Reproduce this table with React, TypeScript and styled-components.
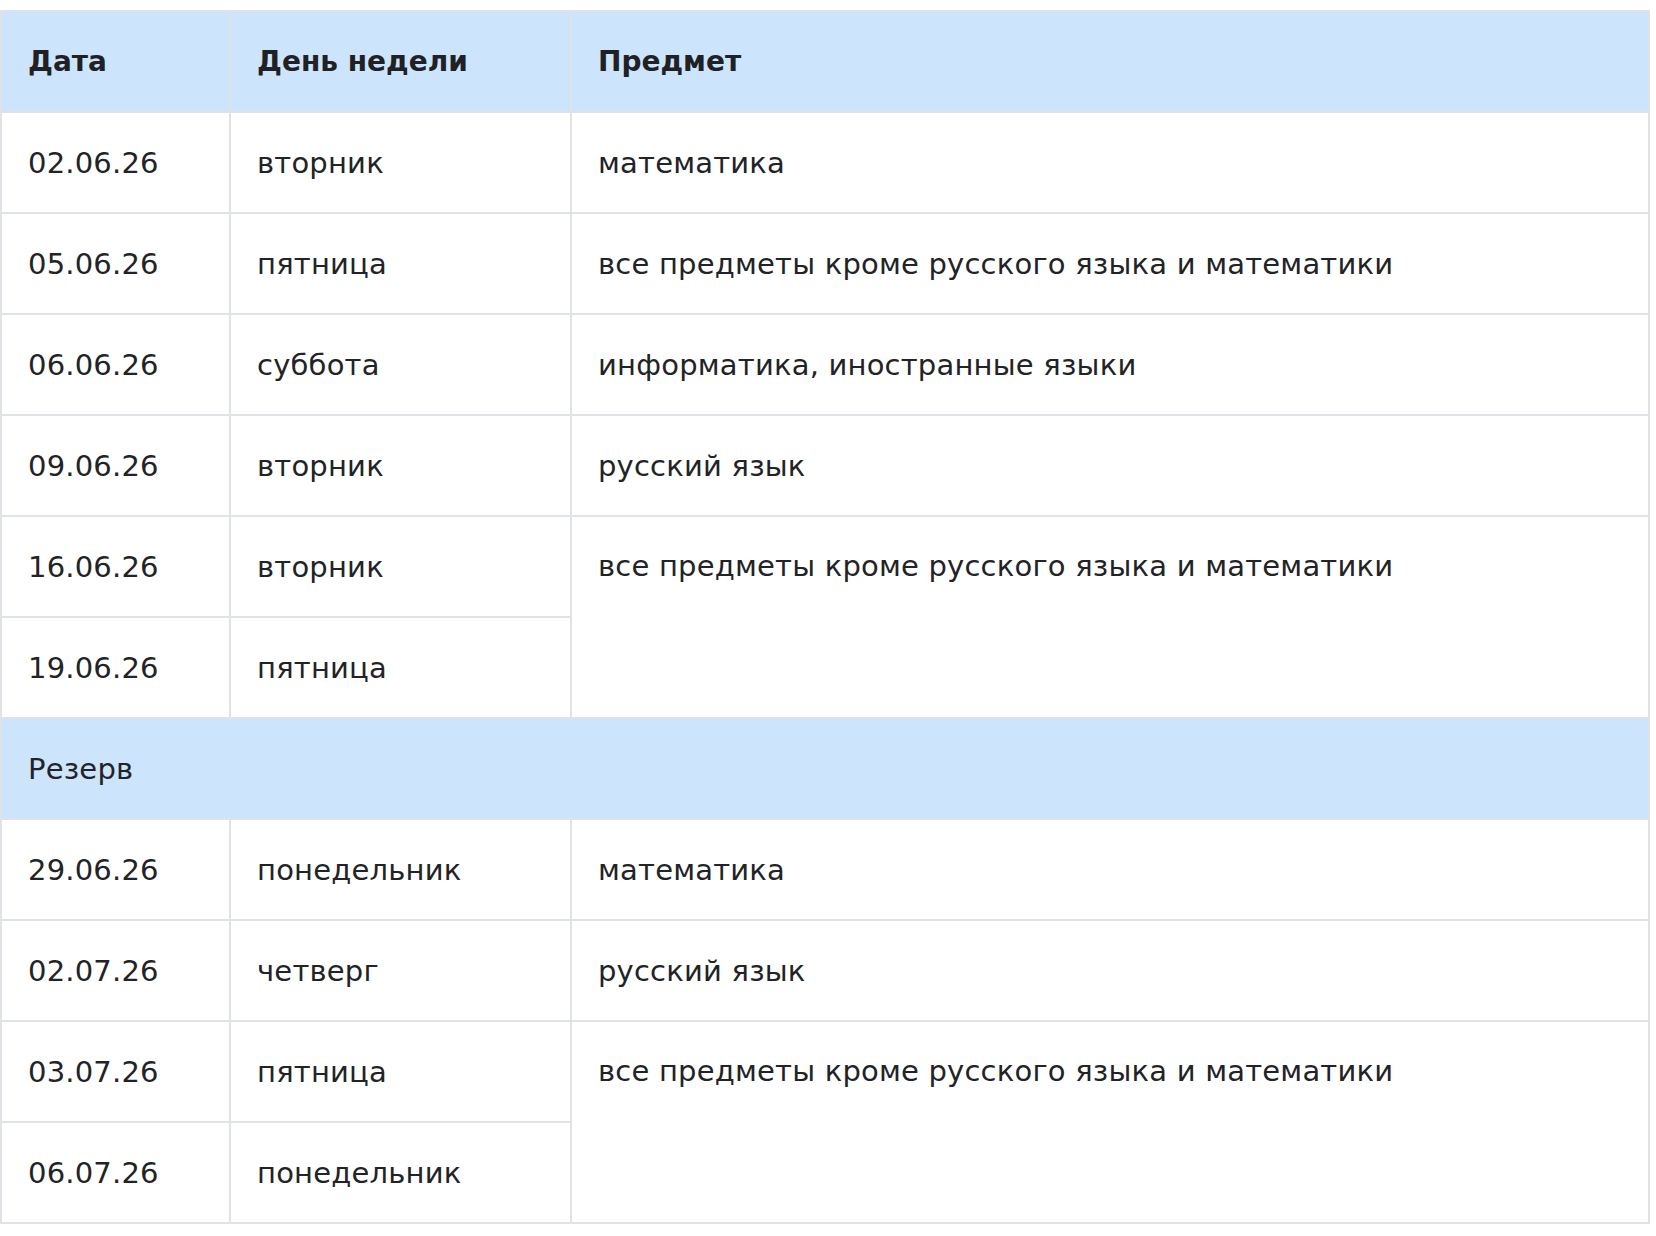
import React from 'react';
import styled, { createGlobalStyle } from 'styled-components';

const GlobalStyle = createGlobalStyle`
  html, body {
    margin: 0;
    padding: 0;
    background: #ffffff;
  }
  body {
    font-family: "DejaVu Sans", "Noto Sans", sans-serif;
    color: #222326;
  }
`;

interface ExamRow {
  date: string;
  weekday: string;
  subject?: string;
  span?: number;
}

const mainRows: ExamRow[] = [
  { date: '02.06.26', weekday: 'вторник', subject: 'математика' },
  { date: '05.06.26', weekday: 'пятница', subject: 'все предметы кроме русского языка и математики' },
  { date: '06.06.26', weekday: 'суббота', subject: 'информатика, иностранные языки' },
  { date: '09.06.26', weekday: 'вторник', subject: 'русский язык' },
  { date: '16.06.26', weekday: 'вторник', subject: 'все предметы кроме русского языка и математики', span: 2 },
  { date: '19.06.26', weekday: 'пятница' },
];

const reserveRows: ExamRow[] = [
  { date: '29.06.26', weekday: 'понедельник', subject: 'математика' },
  { date: '02.07.26', weekday: 'четверг', subject: 'русский язык' },
  { date: '03.07.26', weekday: 'пятница', subject: 'все предметы кроме русского языка и математики', span: 2 },
  { date: '06.07.26', weekday: 'понедельник' },
];

const renderRows = (rows: ExamRow[]) =>
  rows.map((row) => (
    <Row key={row.date}>
      <Cell>{row.date}</Cell>
      <Cell>{row.weekday}</Cell>
      {row.subject && (
        <Cell rowSpan={row.span ?? 1} $spanned={(row.span ?? 1) > 1}>
          {row.subject}
        </Cell>
      )}
    </Row>
  ));

export default function App() {
  return (
    <Page>
      <GlobalStyle />
      <Table>
        <colgroup>
          <col style={{ width: 229 }} />
          <col style={{ width: 341 }} />
          <col />
        </colgroup>
        <thead>
          <Row>
            <HeadCell>Дата</HeadCell>
            <HeadCell>День недели</HeadCell>
            <HeadCell>Предмет</HeadCell>
          </Row>
        </thead>
        <tbody>
          {renderRows(mainRows)}
          <Row>
            <SectionCell colSpan={3}>Резерв</SectionCell>
          </Row>
          {renderRows(reserveRows)}
        </tbody>
      </Table>
    </Page>
  );
}

const Page = styled.div`
  padding: 10px 6px 0 0;
`;

const Table = styled.table`
  width: 100%;
  border-collapse: collapse;
  table-layout: fixed;
`;

const Row = styled.tr`
  height: 101px;
`;

const Cell = styled.td<{ $spanned?: boolean }>`
  border: 2px solid #dfe3e8;
  padding: ${({ $spanned }) => ($spanned ? '32px 26px 0' : '0 26px')};
  vertical-align: ${({ $spanned }) => ($spanned ? 'top' : 'middle')};
  text-align: left;
  font-size: 29px;
  line-height: 34px;
  letter-spacing: 0.2px;
  font-weight: 400;
  color: #222326;
`;

const HeadCell = styled.th`
  border: 2px solid #dfe3e8;
  padding: 0 26px;
  text-align: left;
  vertical-align: middle;
  background: #cce4fc;
  font-size: 28px;
  font-weight: 700;
  color: #1f2125;
`;

const SectionCell = styled(Cell)`
  background: #cce4fc;
`;
